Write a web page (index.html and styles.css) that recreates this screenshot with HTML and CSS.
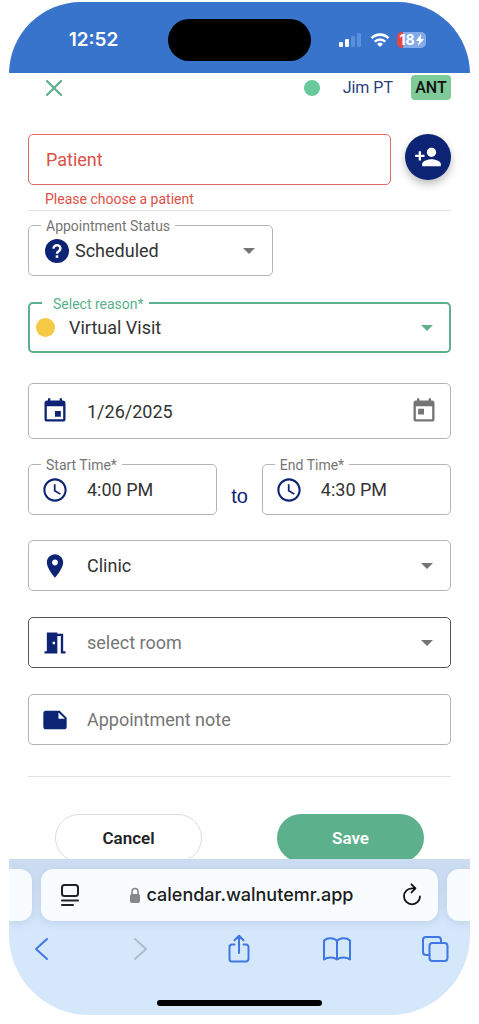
FILE: index.html
```html
<!DOCTYPE html>
<html lang="en">
<head>
<meta charset="utf-8">
<meta name="viewport" content="width=device-width, initial-scale=1">
<title>Appointment</title>
<link rel="stylesheet" href="styles.css">
</head>
<body>
<div class="phone">
  <div class="status-bar">
    <time class="clock">12:52</time>
    <div class="island"></div>
    <div class="indicators">
      <svg width="24" height="16" viewBox="0 0 24 16"><g fill="#fff"><rect x="0" y="10" width="4" height="5" rx="1"/><rect x="6" y="7" width="4" height="8" rx="1"/></g><g fill="#5c8fdb"><rect x="12" y="4" width="4" height="11" rx="1"/><rect x="18" y="1" width="4" height="14" rx="1"/></g></svg>
      <svg width="20" height="16" viewBox="0 0 20 16" fill="none" stroke="#fff" stroke-width="2.6"><path d="M1.500 6.200a12 12 0 0 1 17 0M4.800 9.700a7.400 7.400 0 0 1 10.400 0"/><path d="M10 15l-3-3a4.300 4.300 0 0 1 6 0z" fill="#fff" stroke="none"/></svg>
      <div class="battery"><span>18</span><svg width="8" height="12" viewBox="0 0 8 12"><path d="M5 0L0 7h3L2 12l6-7H5z" fill="#fff"/></svg></div>
    </div>
  </div>

  <header class="app-header">
    <button class="close" type="button" aria-label="Close"><svg width="18" height="18" viewBox="0 0 18 18" fill="none" stroke="#5cb08c" stroke-width="2.2" stroke-linecap="round"><path d="M2 2l14 14M16 2L2 16"/></svg></button>
    <span class="online"></span>
    <span class="user">Jim PT</span>
    <span class="badge">ANT</span>
  </header>

  <form class="form">
    <div class="patient-row">
      <div class="patient">
        <div class="field field-error"><input id="patient" class="control" type="text" placeholder="Patient" aria-label="Patient" aria-describedby="patient-help"></div>
        <p id="patient-help" class="help">Please choose a patient</p>
      </div>
      <button class="fab" type="button" aria-label="Add patient"><svg width="28" height="28" viewBox="0 0 24 24" fill="#fff"><path d="M15 12c2.21 0 4-1.79 4-4s-1.79-4-4-4-4 1.79-4 4 1.79 4 4 4zm-9-2V7H4v3H1v2h3v3h2v-3h3v-2H6zm9 4c-2.67 0-8 1.34-8 4v2h16v-2c0-2.66-5.33-4-8-4z"/></svg></button>
    </div>
    <hr class="rule">

    <div class="field field-select field-status">
      <label class="legend" for="status">Appointment Status</label>
      <svg width="26" height="26" viewBox="0 0 26 26"><circle cx="13" cy="13" r="12" fill="#0c2473"/><path d="M9.600 10.700a3.400 3.200 0 1 1 5.600 2.100c-1.400 1-2.200 1.400-2.200 3" fill="none" stroke="#fff" stroke-width="2.5"/><rect x="11.700" y="17.300" width="2.600" height="2.500" fill="#fff"/></svg>
      <select id="status" class="control"><option>Scheduled</option></select>
      <svg class="arrow" width="12" height="6" viewBox="0 0 12 6"><path d="M0 0h12L6 6z"/></svg>
    </div>

    <div class="field field-reason">
      <label class="legend" for="reason">Select reason*</label>
      <span class="dot"></span>
      <select id="reason" class="control"><option>Virtual Visit</option></select>
      <svg class="arrow" width="12" height="6" viewBox="0 0 12 6"><path d="M0 0h12L6 6z"/></svg>
    </div>

    <div class="field field-date">
      <svg class="icon" viewBox="0 0 24 24"><path d="M17 12h-5v5h5v-5zM16 1v2H8V1H6v2H5c-1.11 0-1.99.9-1.99 2L3 19c0 1.1.89 2 2 2h14c1.1 0 2-.9 2-2V5c0-1.1-.9-2-2-2h-1V1h-2zm3 18H5V8h14v11z"/></svg>
      <input class="control" type="text" value="1/26/2025" aria-label="Date">
      <button class="picker" type="button" aria-label="Open calendar"><svg width="28" height="28" viewBox="0 0 24 24" fill="#757575"><path d="M19 3h-1V1h-2v2H8V1H6v2H5c-1.11 0-1.99.9-1.99 2L3 19c0 1.1.89 2 2 2h14c1.1 0 2-.9 2-2V5c0-1.1-.9-2-2-2zm0 16H5V8h14v11zM7 10h5v5H7z"/></svg></button>
    </div>

    <div class="times">
      <div class="field">
        <label class="legend" for="start">Start Time*</label>
        <svg class="icon" viewBox="0 0 24 24"><path d="M11.99 2C6.47 2 2 6.48 2 12s4.47 10 9.99 10C17.52 22 22 17.52 22 12S17.52 2 11.99 2zM12 20.2c-4.5 0-8.2-3.7-8.2-8.2S7.5 3.800 12 3.800s8.200 3.700 8.200 8.200-3.700 8.200-8.200 8.200zm.5-13.200H11v6l5.250 3.150.75-1.230-4.500-2.670z"/></svg>
        <input id="start" class="control" type="text" value="4:00 PM">
      </div>
      <span class="to">to</span>
      <div class="field">
        <label class="legend" for="end">End Time*</label>
        <svg class="icon" viewBox="0 0 24 24"><path d="M11.99 2C6.47 2 2 6.48 2 12s4.47 10 9.99 10C17.52 22 22 17.52 22 12S17.52 2 11.99 2zM12 20.2c-4.5 0-8.2-3.7-8.2-8.2S7.5 3.800 12 3.800s8.200 3.700 8.200 8.200-3.700 8.200-8.200 8.200zm.5-13.200H11v6l5.250 3.150.75-1.230-4.500-2.670z"/></svg>
        <input id="end" class="control" type="text" value="4:30 PM">
      </div>
    </div>

    <div class="field field-select">
      <svg class="icon" viewBox="0 0 24 24"><path d="M12 2C8.13 2 5 5.13 5 9c0 5.25 7 13 7 13s7-7.75 7-13c0-3.87-3.13-7-7-7zm0 9.500c-1.380 0-2.500-1.120-2.500-2.500s1.120-2.500 2.500-2.500 2.500 1.120 2.500 2.500-1.120 2.500-2.500 2.500z"/></svg>
      <select class="control" aria-label="Location"><option>Clinic</option></select>
      <svg class="arrow" width="12" height="6" viewBox="0 0 12 6"><path d="M0 0h12L6 6z"/></svg>
    </div>

    <div class="field field-select field-dark">
      <svg class="icon" viewBox="0 0 24 24"><path d="M14 6v15H3v-2h2V3h9v1h5v15h2v2h-4V6h-3zm-4 5v2h2v-2h-2z"/></svg>
      <select class="control muted" aria-label="Room"><option>select room</option></select>
      <svg class="arrow" width="12" height="6" viewBox="0 0 12 6"><path d="M0 0h12L6 6z"/></svg>
    </div>

    <div class="field">
      <svg class="icon" viewBox="0 0 24 24"><path d="M22 10l-6-6H4c-1.100 0-2 .9-2 2v12.010c0 1.100.9 1.990 2 1.990l16-.01c1.100 0 2-.89 2-1.990v-8zm-7-4.500l5.500 5.500H15V5.500z"/></svg>
      <input class="control" type="text" placeholder="Appointment note" aria-label="Appointment note">
    </div>

    <hr class="rule rule-end">
    <div class="actions">
      <button class="btn btn-cancel" type="button">Cancel</button>
      <button class="btn btn-save" type="submit">Save</button>
    </div>
  </form>

  <footer class="browser">
    <div class="tabs">
      <div class="tab-edge"></div>
      <div class="address">
        <button class="tool" type="button" aria-label="Page settings"><svg width="20" height="24" viewBox="0 0 20 24" fill="none" stroke="#222" stroke-width="2" stroke-linecap="round"><rect x="2" y="2" width="16" height="11" rx="2.500"/><path d="M2 17.500h16M2 22h11"/></svg></button>
        <div class="url"><svg width="12" height="17" viewBox="0 0 12 17"><path d="M3 8V4.500a3 3 0 0 1 6 0V8" fill="none" stroke="#85878b" stroke-width="1.600"/><rect x="1" y="7" width="10" height="9" rx="2" fill="#85878b"/></svg><span>calendar.walnutemr.app</span></div>
        <button class="tool" type="button" aria-label="Reload"><svg width="20" height="24" viewBox="0 0 20 24" fill="none" stroke="#111" stroke-width="1.800" stroke-linecap="round" stroke-linejoin="round"><path d="M12.500 5.300H10a8 8 0 1 0 8 8M9.500 1.300l4 4-4 4"/></svg></button>
      </div>
      <div class="tab-edge tab-next"></div>
    </div>
    <nav class="toolbar">
      <button class="tool" type="button" aria-label="Back"><svg width="28" height="30" viewBox="0 0 28 30"><path d="M19 5L8 15l11 10"/></svg></button>
      <button class="tool tool-off" type="button" aria-label="Forward"><svg width="28" height="30" viewBox="0 0 28 30"><path d="M9 5l11 10L9 25"/></svg></button>
      <button class="tool" type="button" aria-label="Share"><svg width="28" height="30" viewBox="0 0 28 30"><path d="M9.500 10.500H7a2.500 2.500 0 0 0-2.500 2.500v12A2.500 2.500 0 0 0 7 27.500h14a2.500 2.500 0 0 0 2.500-2.500V13a2.500 2.500 0 0 0-2.500-2.500h-2.500M14 19V2M9.500 6.200L14 1.700l4.500 4.500"/></svg></button>
      <button class="tool" type="button" aria-label="Bookmarks"><svg width="28" height="30" viewBox="0 0 28 30"><path d="M14 7v18.500M14 7C11.500 3.800 4.500 3.300 1 6.500v19c3.500-2.600 10-2.600 13 0 3-2.600 9.500-2.600 13 0v-19C23.500 3.300 16.500 3.800 14 7z"/></svg></button>
      <button class="tool" type="button" aria-label="Tabs"><svg width="28" height="30" viewBox="0 0 28 30"><rect x="8.500" y="9" width="18" height="18" rx="3"/><path d="M8.500 21H5a3 3 0 0 1-3-3V6a3 3 0 0 1 3-3h12a3 3 0 0 1 3 3v3"/></svg></button>
    </nav>
    <div class="home"></div>
  </footer>
</div>
</body>
</html>
```
FILE: styles.css
```css
:root {
  --navy: #0c2473;
  --green: #5cb08c;
  --red: #dc5147;
  --grey: #757575;
  --line: #b4b4b4;
}
* { box-sizing: border-box; }
body {
  margin: 0;
  padding: 2px 9px 9px;
  background: #fff;
  font-family: Roboto, sans-serif;
  color: #333;
}
button { padding: 0; border: 0; background: none; font: inherit; cursor: pointer; }
svg { display: block; flex: none; }

.phone {
  border-radius: 72px 72px 80px 80px;
  overflow: hidden;
  background: #fff;
}

/* Phone status bar */
.status-bar {
  display: grid;
  grid-template-columns: 1fr 143px 1fr;
  align-items: center;
  height: 71px;
  padding-top: 4px;
  background: #3974cc;
  color: #fff;
}
.clock { padding-left: 10px; text-align: center; font: 600 19px/24px Inter, sans-serif; }
.island { height: 42px; border-radius: 21px; background: #000; }
.indicators { display: flex; align-items: center; gap: 7px; padding-left: 28px; }
.battery {
  display: flex;
  align-items: center;
  justify-content: center;
  gap: 1px;
  width: 29px;
  height: 16px;
  border-radius: 5px;
  background: linear-gradient(90deg, #e8483c 6px, #82abe9 6px);
  font: 700 14px/16px Inter, sans-serif;
}

/* App header */
.app-header {
  display: flex;
  align-items: center;
  height: 29px;
  padding: 0 19px 0 36px;
}
.close { margin-right: auto; }
.online { width: 16px; height: 16px; border-radius: 50%; background: #68ca9b; }
.user { margin: 0 18px 0 23px; color: #2b3d7c; font-size: 16px; line-height: 24px; }
.badge {
  width: 40px;
  border-radius: 4px;
  background: #7fca99;
  color: #111;
  font-size: 16px;
  font-weight: 500;
  line-height: 25px;
  text-align: center;
}

/* Form */
.form { padding: 32px 19px 0; }
.patient-row { display: flex; align-items: flex-start; gap: 14px; }
.patient { flex: 1; }
.help { margin: 5px 0 0 17px; color: var(--red); font-size: 14px; line-height: 18px; }
.fab {
  display: grid;
  place-items: center;
  width: 46px;
  height: 46px;
  border-radius: 50%;
  background: var(--navy);
  box-shadow: 0 4px 8px #0004;
}
.rule { margin: 2px 0 14px; border: 0; border-top: 1px solid #e2e2e2; }
.field {
  position: relative;
  display: flex;
  align-items: center;
  gap: 18px;
  min-width: 0;
  height: 51px;
  margin-bottom: 25px;
  padding: 0 17px 0 12px;
  border: 1px solid var(--line);
  border-radius: 5px;
}
.icon { width: 28px; height: 28px; fill: var(--navy); }
.arrow { fill: var(--grey); }
.legend {
  position: absolute;
  top: -9px;
  left: 12px;
  padding: 0 5px;
  background: #fff;
  color: var(--grey);
  font-size: 14px;
  line-height: 18px;
}
.control {
  flex: 1;
  min-width: 0;
  height: 100%;
  padding: 0;
  border: 0;
  outline: 0;
  appearance: none;
  background: none;
  color: #333;
  font: 18px/24px Roboto, sans-serif;
}
.control::placeholder, .muted { color: var(--grey); opacity: 1; }
.field-select { margin-bottom: 26px; }
.field-error { margin-bottom: 0; padding-left: 17px; border-color: #dd6a66; }
.field-error .control::placeholder { color: var(--red); }
.field-status { gap: 5px; width: 58%; padding-left: 15px; }
.field-reason {
  gap: 14px;
  margin-bottom: 30px;
  padding: 0 16px 0 6px;
  border: 2px solid var(--green);
}
.field-reason .legend { padding: 0 5px 0 11px; color: var(--green); }
.field-reason .arrow { fill: var(--green); }
.dot { width: 19px; height: 19px; border-radius: 50%; background: #f6c945; }
.field-date { height: 56px; padding-right: 12px; }
.field-dark { border-color: #555; }
.times { display: flex; gap: 14px; }
.times .field { flex: 1; }
.to { padding-top: 20px; color: var(--navy); font: 20px/24px "Liberation Sans", sans-serif; }
.rule-end { margin: 31px 0 37px; }
.actions { display: flex; justify-content: space-between; padding: 0 27px; }
.btn { width: 147px; height: 48px; border-radius: 24px; font-size: 17px; font-weight: 600; }
.btn-cancel { border: 1px solid #ddd; color: #222; }
.btn-save { background: var(--green); color: #fff; }

/* Browser bar, drawn over the lower edge of the page */
.browser {
  position: relative;
  margin-top: -3px;
  padding: 10px 0 9px;
  background: linear-gradient(#cbdcf2, #d5e7fb 64px);
}
.tabs { display: flex; gap: 9px; }
.tab-edge, .address { height: 52px; background: #f9fcff; box-shadow: 0 2px 8px #7895b840; }
.tab-edge { width: 23px; border-radius: 0 12px 12px 0; }
.tab-next { border-radius: 12px 0 0 12px; }
.address {
  display: flex;
  flex: 1;
  align-items: center;
  justify-content: space-between;
  padding: 0 16px 0 19px;
  border-radius: 12px;
}
.url {
  display: flex;
  align-items: center;
  gap: 6px;
  color: #1c1c1e;
  font: 500 18px/24px Inter, sans-serif;
}
.toolbar { display: flex; justify-content: space-between; padding: 13px 21px 0 19px; }
.toolbar svg { fill: none; stroke: #3f78e4; stroke-width: 2; stroke-linecap: round; stroke-linejoin: round; }
.toolbar .tool-off svg { stroke: #adbccd; }
.home { width: 165px; height: 6px; margin: 36px auto 0; border-radius: 3px; background: #000; }
```
